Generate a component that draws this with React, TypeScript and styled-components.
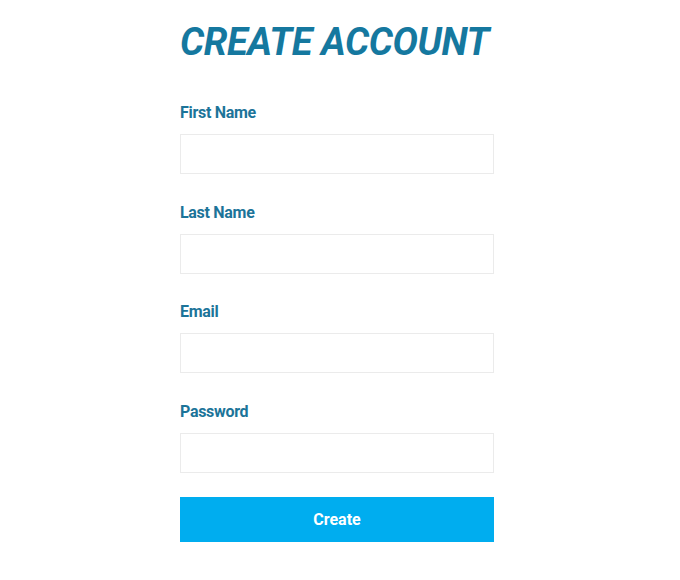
import * as React from 'react';
import styled, { createGlobalStyle } from 'styled-components';

const GlobalStyle = createGlobalStyle`
	body {
		margin: 0;
		background: #ffffff;
		font-family: Roboto, "Liberation Sans", sans-serif;
	}
`;

const Page = styled.div`
	padding: 23px 0 0 180px;
`;

const Form = styled.form`
	width: 314px;
	display: flex;
	flex-direction: column;
`;

const Title = styled.h1`
	margin: 0 0 40px 0;
	font-size: 38px;
	line-height: 38px;
	font-weight: 700;
	font-style: italic;
	letter-spacing: -0.4px;
	color: #15789f;
	white-space: nowrap;
`;

const Field = styled.div`
	display: flex;
	flex-direction: column;
	margin-bottom: 26.5px;
`;

const Label = styled.label`
	padding-top: 2px;
	margin-bottom: 11px;
	font-size: 16px;
	line-height: 20px;
	font-weight: 700;
	letter-spacing: -0.3px;
	color: #1c7499;
`;

const Input = styled.input`
	box-sizing: border-box;
	width: 100%;
	height: 40px;
	margin: 0;
	padding: 0 10px;
	border: 1px solid #ebebeb;
	border-radius: 0;
	background: #ffffff;
	font-family: inherit;
	font-size: 15px;
	outline: none;
`;

const Button = styled.button`
	box-sizing: border-box;
	width: 100%;
	height: 45px;
	margin-top: -2px;
	border: none;
	border-radius: 0;
	background: #00adef;
	color: #ffffff;
	font-family: inherit;
	font-size: 16px;
	font-weight: 700;
	cursor: pointer;
`;

const fields = [
	{ name: 'firstName', label: 'First Name', type: 'text' },
	{ name: 'lastName', label: 'Last Name', type: 'text' },
	{ name: 'email', label: 'Email', type: 'email' },
	{ name: 'password', label: 'Password', type: 'password' },
];

export default function App() {
	return (
		<Page>
			<GlobalStyle />
			<Form onSubmit={e => e.preventDefault()}>
				<Title>CREATE ACCOUNT</Title>
				{fields.map(f => (
					<Field key={f.name}>
						<Label htmlFor={f.name}>{f.label}</Label>
						<Input id={f.name} name={f.name} type={f.type} />
					</Field>
				))}
				<Button type="submit">Create</Button>
			</Form>
		</Page>
	);
}
